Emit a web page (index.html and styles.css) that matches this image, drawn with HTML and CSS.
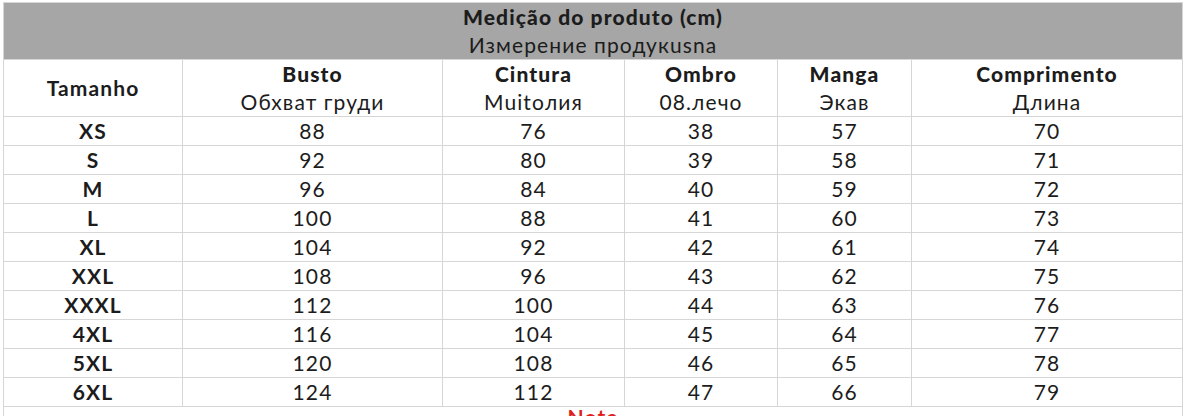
FILE: index.html
```html
<!DOCTYPE html>
<html lang="pt">
<head>
<meta charset="utf-8">
<title>Medição do produto</title>
<link rel="stylesheet" href="styles.css">
</head>
<body>
<table class="size-table">
  <colgroup>
    <col class="c-size">
    <col class="c-busto">
    <col class="c-cintura">
    <col class="c-ombro">
    <col class="c-manga">
    <col class="c-comp">
  </colgroup>
  <thead>
    <tr class="title-row">
      <th colspan="6"><b>Medição do produto (cm)</b><br><span class="sub">Измерение продукusna</span></th>
    </tr>
    <tr class="head-row">
      <th class="size">Tamanho</th>
      <th><b>Busto</b><br><span class="sub">Обхват груди</span></th>
      <th><b>Cintura</b><br><span class="sub">Muitoлия</span></th>
      <th><b>Ombro</b><br><span class="sub">08.лечо</span></th>
      <th><b>Manga</b><br><span class="sub">Экав</span></th>
      <th><b>Comprimento</b><br><span class="sub">Длина</span></th>
    </tr>
  </thead>
  <tbody>
    <tr><th>XS</th><td>88</td><td>76</td><td>38</td><td>57</td><td>70</td></tr>
    <tr><th>S</th><td>92</td><td>80</td><td>39</td><td>58</td><td>71</td></tr>
    <tr><th>M</th><td>96</td><td>84</td><td>40</td><td>59</td><td>72</td></tr>
    <tr><th>L</th><td>100</td><td>88</td><td>41</td><td>60</td><td>73</td></tr>
    <tr><th>XL</th><td>104</td><td>92</td><td>42</td><td>61</td><td>74</td></tr>
    <tr><th>XXL</th><td>108</td><td>96</td><td>43</td><td>62</td><td>75</td></tr>
    <tr><th>XXXL</th><td>112</td><td>100</td><td>44</td><td>63</td><td>76</td></tr>
    <tr><th>4XL</th><td>116</td><td>104</td><td>45</td><td>64</td><td>77</td></tr>
    <tr><th>5XL</th><td>120</td><td>108</td><td>46</td><td>65</td><td>78</td></tr>
    <tr><th>6XL</th><td>124</td><td>112</td><td>47</td><td>66</td><td>79</td></tr>
    <tr class="note-row"><td colspan="6">Note</td></tr>
  </tbody>
</table>
</body>
</html>
```

FILE: styles.css
```css
html, body {
  margin: 0;
  padding: 0;
  background: #ffffff;
}

body {
  padding: 2px 0 0 3px;
  font-family: Lato, "Noto Sans", sans-serif;
  color: #1c1c1c;
  overflow: hidden;
}

.size-table {
  border-collapse: collapse;
  table-layout: fixed;
  width: 1180px;
  font-size: 21px;
  letter-spacing: 1.1px;
}

.c-size { width: 179px; }
.c-busto { width: 260px; }
.c-cintura { width: 182px; }
.c-ombro { width: 153px; }
.c-manga { width: 134px; }
.c-comp { width: 271px; }

.size-table th,
.size-table td {
  border: 1px solid #d6d6d6;
  padding: 0;
  text-align: center;
  vertical-align: middle;
  line-height: 28px;
}

.size-table th {
  font-weight: 700;
}

.sub {
  font-weight: 400;
}

.title-row th {
  background: #a6a6a6;
  height: 56px;
  border-color: #d6d6d6;
}

.head-row th {
  height: 56px;
}

tbody th,
tbody td {
  height: 28px;
}

tbody td {
  font-weight: 400;
}

.note-row td {
  color: #e0201a;
  font-weight: 700;
  height: 40px;
  line-height: 20px;
  vertical-align: top;
  padding-top: 0;
}
```
